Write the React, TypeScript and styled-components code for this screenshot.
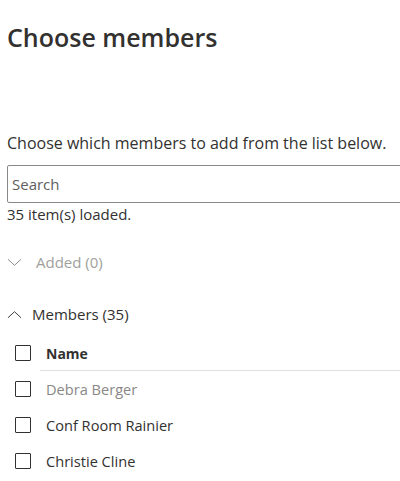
import React from 'react';
import styled, { createGlobalStyle } from 'styled-components';

const GlobalStyle = createGlobalStyle`
  html, body {
    margin: 0;
    padding: 0;
    background: #ffffff;
    overflow: hidden;
  }
  body {
    font-family: 'Open Sans', 'Noto Sans', sans-serif;
    color: #323130;
  }
`;

const Page = styled.div`
  width: 400px;
  height: 481px;
  padding-left: 7px;
  box-sizing: border-box;
  overflow: hidden;
`;

const Title = styled.h1`
  margin: 0;
  padding-top: 19px;
  height: 36px;
  line-height: 36px;
  font-size: 25px;
  font-weight: 600;
  color: #323130;
  white-space: nowrap;
`;

const Description = styled.p`
  margin: 0;
  margin-top: 76px;
  height: 24px;
  line-height: 24px;
  font-size: 16px;
  color: #323130;
  white-space: nowrap;
`;

const SearchBox = styled.div`
  margin-top: 10px;
  height: 38px;
  width: 420px;
  box-sizing: border-box;
  border: 1px solid #8a8886;
  border-radius: 2px;
  display: flex;
  align-items: center;
  padding-left: 4px;
`;

const SearchInput = styled.input`
  border: none;
  outline: none;
  background: transparent;
  font-family: inherit;
  font-size: 15px;
  color: #323130;
  width: 100%;
  padding: 0;
  &::placeholder {
    color: #605e5c;
  }
`;

const Status = styled.div`
  height: 22px;
  line-height: 22px;
  font-size: 15px;
  color: #323130;
`;

const GroupHeader = styled.div<{ $disabled?: boolean; $top: number; $gap: number }>`
  margin-top: ${({ $top }) => $top}px;
  height: 28px;
  display: flex;
  align-items: center;
  gap: ${({ $gap }) => $gap}px;
  font-size: 15px;
  color: ${({ $disabled }) => ($disabled ? '#a19f9d' : '#323130')};
`;

const Chevron = styled.svg`
  width: 15px;
  height: 15px;
  flex-shrink: 0;
`;

const Table = styled.div`
  margin-top: 7px;
  padding-left: 8px;
`;

const Row = styled.div<{ $header?: boolean }>`
  height: 36px;
  display: flex;
  align-items: center;
  gap: 15px;
  font-size: ${({ $header }) => ($header ? 14 : 14.6)}px;
  font-weight: ${({ $header }) => ($header ? 700 : 400)};
`;

const HeaderRow = styled(Row)`
  position: relative;
  &::after {
    content: '';
    position: absolute;
    left: 25px;
    right: -20px;
    bottom: 0;
    height: 1px;
    background: #e1dfdd;
  }
`;

const Box = styled.span`
  width: 16px;
  height: 16px;
  box-sizing: border-box;
  border: 1px solid #323130;
  border-radius: 1px;
  flex-shrink: 0;
`;

const Name = styled.span<{ $muted?: boolean }>`
  color: ${({ $muted }) => ($muted ? '#8a8886' : '#323130')};
  white-space: nowrap;
`;

const ChevronDown = ({ color }: { color: string }) => (
  <Chevron viewBox="0 0 16 16">
    <path d="M1 4.5 L8 11 L15 4.5" fill="none" stroke={color} strokeWidth="1" />
  </Chevron>
);

const ChevronUp = ({ color }: { color: string }) => (
  <Chevron viewBox="0 0 16 16">
    <path d="M1 11.5 L8 5 L15 11.5" fill="none" stroke={color} strokeWidth="1" />
  </Chevron>
);

const members = [
  { name: 'Debra Berger', muted: true },
  { name: 'Conf Room Rainier', muted: false },
  { name: 'Christie Cline', muted: false },
];

export default function App() {
  return (
    <>
      <GlobalStyle />
      <Page>
        <Title>Choose members</Title>
        <Description>Choose which members to add from the list below.</Description>
        <SearchBox>
          <SearchInput placeholder="Search" />
        </SearchBox>
        <Status>35 item(s) loaded.</Status>
        <GroupHeader $disabled $top={23} $gap={14}>
          <ChevronDown color="#8a8886" />
          Added (0)
        </GroupHeader>
        <GroupHeader $top={24} $gap={10}>
          <ChevronUp color="#323130" />
          Members (35)
        </GroupHeader>
        <Table>
          <HeaderRow $header>
            <Box />
            <Name>Name</Name>
          </HeaderRow>
          {members.map(m => (
            <Row key={m.name}>
              <Box />
              <Name $muted={m.muted}>{m.name}</Name>
            </Row>
          ))}
        </Table>
      </Page>
    </>
  );
}
